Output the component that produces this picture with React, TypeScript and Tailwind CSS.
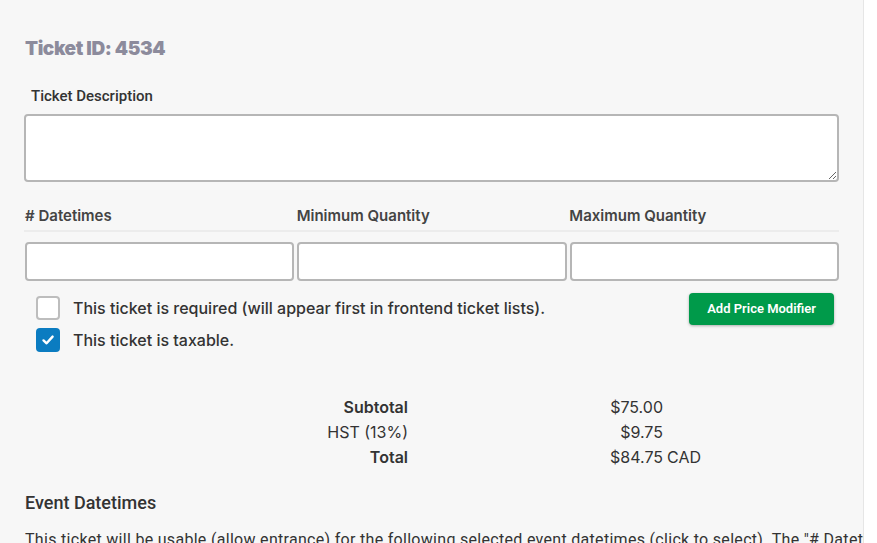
import React from 'react';

const sys = { fontFamily: 'Inter, "Liberation Sans", sans-serif' };
const rob = { fontFamily: 'Roboto, "Liberation Sans", sans-serif' };

function Check({ checked }: { checked?: boolean }) {
  if (checked) {
    return (
      <span className="flex items-center justify-center w-[24px] h-[24px] rounded-[4px] bg-[#0b7cc1]">
        <svg width="14" height="14" viewBox="0 0 14 14">
          <path d="M2.5 7.4 L5.6 10.3 L11.6 3.6" fill="none" stroke="#fff" strokeWidth="2.4" strokeLinecap="round" strokeLinejoin="round" />
        </svg>
      </span>
    );
  }
  return <span className="block w-[24px] h-[24px] rounded-[4px] border-2 border-[#bdbdbd] bg-white" />;
}

export default function App() {
  const totals = [
    { label: 'Subtotal', value: '$75.00', bold: true },
    { label: 'HST (13%)', value: '$9.75', bold: false },
    { label: 'Total', value: '$84.75', bold: true, suffix: 'CAD' },
  ];

  return (
    <div className="w-[877px] h-[543px] overflow-hidden bg-white flex flex-col text-[#333]" style={sys}>
      {/* Top bar */}
      <div className="relative z-10 h-[3px] bg-[#1b1b1b] shadow-[0_3px_14px_rgba(0,0,0,0.22)]" />

      <div className="flex flex-1">
        <div className="w-[864px] bg-[#f7f7f7] border-r border-[#e6e6e6] pl-[24px] pr-[25px]">
          <h1 className="mt-[37px] ml-[1px] text-[19px] leading-[24px] font-black text-[#8c8b9c] tracking-[-0.4px]">
            Ticket ID: 4534
          </h1>

          <div className="mt-[25px] ml-[7px] text-[15px] leading-[20px] font-medium text-[#333]" style={rob}>
            Ticket Description
          </div>
          <textarea className="mt-[8px] block w-[815px] h-[68px] bg-white border-2 border-[#b6b6b6] rounded-[4px] resize-y" />

          {/* Quantity fields */}
          <div className="mt-[24px] grid grid-cols-3 gap-[3px] w-[815px] border-b-2 border-[#ececec] pb-[4px]">
            <div className="pl-[1px] text-[15px] leading-[20px] font-semibold text-[#444]"># Datetimes</div>
            <div className="text-[15px] leading-[20px] font-semibold text-[#444]">Minimum Quantity</div>
            <div className="text-[15px] leading-[20px] font-semibold text-[#444]">Maximum Quantity</div>
          </div>
          <div className="mt-[10px] grid grid-cols-3 gap-[3px] w-[815px] pl-[1px]">
            <input className="h-[39px] bg-white border-2 border-[#b6b6b6] rounded-[4px]" />
            <input className="h-[39px] bg-white border-2 border-[#b6b6b6] rounded-[4px]" />
            <input className="h-[39px] bg-white border-2 border-[#b6b6b6] rounded-[4px]" />
          </div>

          {/* Options */}
          <div className="mt-[12px] flex w-[810px] justify-between">
            <div className="flex flex-col gap-[8px] pl-[12px] pt-[3px]">
              <label className="flex items-center gap-[13px] text-[16px] leading-[24px] font-medium text-[#333]">
                <Check />
                This ticket is required (will appear first in frontend ticket lists).
              </label>
              <label className="flex items-center gap-[13px] text-[16px] leading-[24px] font-medium text-[#333]">
                <Check checked />
                This ticket is taxable.
              </label>
            </div>
            <button className="h-[32px] px-[18px] rounded-[4px] bg-[#009a4a] text-white text-[13px] font-semibold shadow-[0_1px_3px_rgba(0,0,0,0.3)]" style={rob}>
              Add Price Modifier
            </button>
          </div>

          {/* Totals */}
          <div className="mt-[43px] flex flex-col">
            {totals.map((t) => (
              <div key={t.label} className="flex text-[16px] leading-[25px] text-[#333]">
                <div className={`w-[384px] text-right ${t.bold ? 'font-semibold' : 'font-normal'}`}>{t.label}</div>
                <div className="w-[255px] text-right">{t.value}</div>
                {t.suffix && <div className="ml-[4px]">{t.suffix}</div>}
              </div>
            ))}
          </div>

          <div className="mt-[21px] ml-[1px] text-[18px] leading-[24px] font-medium text-[#333]" style={rob}>
            Event Datetimes
          </div>
          <p className="mt-[14px] ml-[1px] text-[16px] leading-[22px] tracking-[0.3px] text-[#333] whitespace-nowrap" style={rob}>
            This ticket will be usable (allow entrance) for the following selected event datetimes (click to select). The "# Datetimes"
          </p>
        </div>
        <div className="flex-1 bg-white" />
      </div>
    </div>
  );
}
